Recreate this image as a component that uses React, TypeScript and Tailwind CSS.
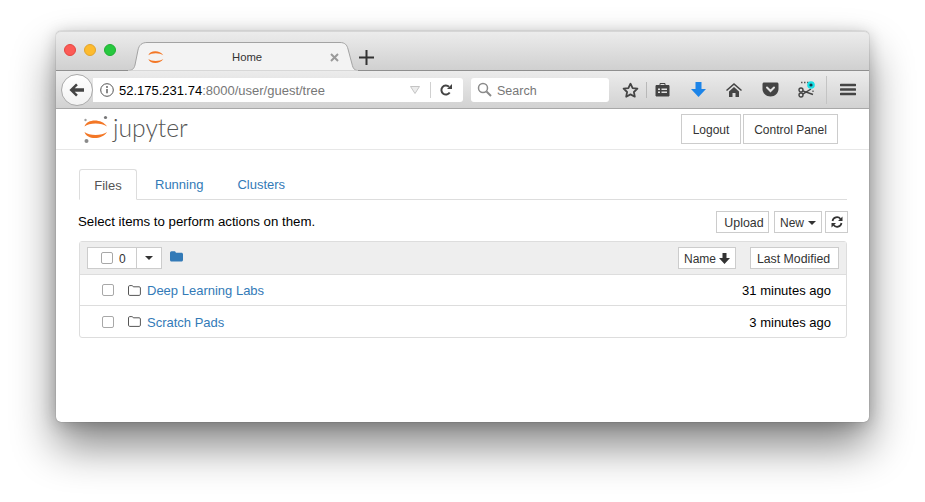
import React from "react";

function JupyterMark({ size = 30, dots = true }: { size?: number; dots?: boolean }) {
  return (
    <svg width={size} height={size} viewBox="0 0 30 30" className="block">
      <path d="M3.5 12.5 C6 4.5 21 4.5 26 12.5 C21 8.5 8 8.5 3.5 12.5Z" fill="#F37726" />
      <path d="M3.5 18 C8 22 21 22 26 18 C21 26 6 26 3.5 18Z" fill="#F37726" />
      {dots && (
        <>
          <circle cx="24.5" cy="3.5" r="1.6" fill="#767677" />
          <circle cx="4.5" cy="6" r="1.2" fill="#9e9e9e" />
          <circle cx="5.5" cy="27" r="2" fill="#8a8a8a" />
        </>
      )}
    </svg>
  );
}

function Check({ className = "" }: { className?: string }) {
  return <span className={`block w-[12px] h-[12px] rounded-[2px] border border-[#a8a8a8] bg-white ${className}`} />;
}

function FolderOutline() {
  return (
    <svg width="13" height="11" viewBox="0 0 13 11" className="block">
      <path d="M.5 9.2V1.8C.5 1.1 1 .6 1.7.6h2.2c.6 0 .9.3 1.1.7l.3.5h5.9c.7 0 1.2.5 1.2 1.2v6.2c0 .7-.5 1.2-1.2 1.2H1.7C1 10.4.5 9.9.5 9.2Z" fill="none" stroke="#555" strokeWidth="1" />
    </svg>
  );
}

function Caret({ color = "#333" }: { color?: string }) {
  return (
    <svg width="8" height="4" viewBox="0 0 8 4" className="block">
      <path d="M0 0h8L4 4Z" fill={color} />
    </svg>
  );
}

function Row({ name, time, last }: { name: string; time: string; last?: boolean }) {
  return (
    <div className={`flex items-center h-[31px] pl-[22px] pr-[15px] ${last ? "" : "border-b border-[#ddd]"}`}>
      <Check />
      <span className="ml-[14px]"><FolderOutline /></span>
      <a className="ml-[6px] mt-[2px] text-[13px] text-[#337ab7]">{name}</a>
      <span className="ml-auto mt-[2px] text-[13px] text-black">{time}</span>
    </div>
  );
}

export default function App() {
  return (
    <div className="w-[925px] h-[502px] bg-white overflow-hidden pl-[56px] pt-[31px] font-['Liberation_Sans',Arial,sans-serif]">
      <div className="relative w-[813px] h-[391px] rounded-[5px] bg-white flex flex-col shadow-[0_0_1px_rgba(0,0,0,0.55),0_24px_44px_rgba(0,0,0,0.48),0_2px_16px_rgba(0,0,0,0.2)]">
        {/* Title bar */}
        <div className="relative h-[40px] rounded-t-[5px] border-t border-[#d6d6d6] border-b border-b-[#8f8f8f] bg-gradient-to-b from-[#ececec] to-[#d0d0d0] flex items-center">
          <div className="flex gap-[8px] ml-[8px] -mt-[2px]">
            <span className="w-[12px] h-[12px] rounded-full bg-[#fc5b57] border border-[#e5453f]" />
            <span className="w-[12px] h-[12px] rounded-full bg-[#fdbb2e] border border-[#e2a42b]" />
            <span className="w-[12px] h-[12px] rounded-full bg-[#27c83f] border border-[#1fb032]" />
          </div>
          {/* Tab */}
          <svg width="230" height="29" viewBox="0 0 230 29" className="absolute left-[72px] top-[10px]">
            <path d="M0 28.500C4 28.500 6 27 7 23L10 8C11 3 14 .5 19 .5H212C217 .5 219 3 220 7L224 22C225 27 227 28.500 230 28.500" fill="#f3f3f3" stroke="#a3a3a3" />
            <path d="M0 29H230" stroke="#ececec" />
          </svg>
          <span className="absolute left-[90px] top-[15px]"><JupyterMark size={20} dots={false} /></span>
          <span className="absolute left-[176px] top-[18px] text-[11.300px] leading-[14px] text-[#333]">Home</span>
          <svg width="9" height="9" viewBox="0 0 9 9" className="absolute left-[274px] top-[21px]">
            <path d="M1 1l7 7M8 1L1 8" stroke="#9a9a9a" strokeWidth="2" />
          </svg>
          <svg width="15" height="15" viewBox="0 0 15 15" className="absolute left-[303px] top-[18px]">
            <path d="M7.500 0v15M0 7.500h15" stroke="#333" strokeWidth="2" />
          </svg>
        </div>

        {/* Toolbar */}
        <div className="relative h-[38px] border-b border-[#a8a8a8] bg-gradient-to-b from-[#ececec] to-[#d2d2d2] flex items-center pl-[37px]">
          <div className="w-[370px] h-[24px] rounded-r-[3px] bg-white flex items-center text-[13px]">
            <svg width="14" height="14" viewBox="0 0 14 14" className="ml-[7px]">
              <circle cx="7" cy="7" r="6.300" fill="none" stroke="#555" />
              <path d="M7 6v4.200" stroke="#555" strokeWidth="1.400" />
              <circle cx="7" cy="4" r=".9" fill="#555" />
            </svg>
            <span className="ml-[5px] mt-[2px] text-black">52.175.231.74</span>
            <span className="mt-[2px] text-[#777]">:8000/user/guest/tree</span>
            <svg width="10" height="8" viewBox="0 0 10 8" className="ml-[85px]">
              <path d="M.5.500h9L5 7.500Z" fill="#ececec" stroke="#c4c4c4" />
            </svg>
            <span className="ml-[10px] w-px h-[16px] bg-[#d0d0d0]" />
            <svg width="14" height="14" viewBox="0 0 14 14" className="ml-[8px]">
              <path d="M10.700 9.500A4.500 4.500 0 1 1 10 3.800" fill="none" stroke="#444" strokeWidth="2" />
              <path d="M8 6h5V1Z" fill="#444" />
            </svg>
          </div>
          <div className="ml-[8px] w-[138px] h-[24px] rounded-[3px] bg-white flex items-center">
            <svg width="15" height="15" viewBox="0 0 15 15" className="ml-[6px]">
              <circle cx="6" cy="6" r="4.500" fill="none" stroke="#8a8a8a" strokeWidth="1.500" />
              <path d="M9.500 9.500l4.500 4.500" stroke="#8a8a8a" strokeWidth="2" />
            </svg>
            <span className="ml-[5px] mt-[3px] text-[12.500px] text-[#777]">Search</span>
          </div>
          <div className="absolute left-[566px] top-0 h-full flex items-center">
            <svg width="17" height="16" viewBox="0 0 17 16">
              <path d="M8.500 1.700l2.100 4.400 4.800.6-3.500 3.300.9 4.700-4.300-2.300-4.300 2.300.9-4.700L1.600 6.700l4.800-.6Z" fill="none" stroke="#444" strokeWidth="1.800" strokeLinejoin="round" />
            </svg>
            <span className="ml-[7px] w-px h-[16px] bg-[#b8b8b8]" />
            <svg width="15" height="15" viewBox="0 0 15 15" className="ml-[8px]">
              <path d="M1 3.500h13v10.500H1Z" fill="#444" stroke="#444" strokeLinejoin="round" />
              <path d="M5 3.500V1.500h5v2" fill="none" stroke="#444" />
              <path d="M3 6.500h2v1.500H3ZM6.500 6.500H12V8H6.500ZM3 9.500h2V11H3ZM6.500 9.500H12V11H6.500Z" fill="#e2e2e2" />
            </svg>
            <svg width="15" height="15" viewBox="0 0 15 15" className="ml-[21px]">
              <path d="M4.500 0h6v7h4.500L7.500 15 0 7h4.500Z" fill="#1c84e8" />
            </svg>
            <svg width="16" height="14" viewBox="0 0 16 14" className="ml-[20px]">
              <path d="M8 0L0 7l1 1 7-6 7 6 1-1ZM3 8.500L8 4l5 4.500V14H9.500V10h-3v4H3Z" fill="#444" />
            </svg>
            <svg width="17" height="15" viewBox="0 0 17 15" className="ml-[20px]">
              <path d="M2 .5h13c.8 0 1.500.7 1.500 1.500v5c0 4-3.500 7.500-8 7.500S.5 11 .5 7V2C.5 1.200 1.200.5 2 .5Z" fill="#444" />
              <path d="M5 5.500l3.500 3.500L12 5.500" fill="none" stroke="#e2e2e2" strokeWidth="2" strokeLinecap="round" />
            </svg>
            <svg width="18" height="17" viewBox="0 0 18 17" className="ml-[19px]">
              <path d="M3 1.500h8M15 9.500v2" stroke="#555" strokeWidth="1.300" strokeDasharray="1.500 1.500" />
              <circle cx="3" cy="9" r="2" fill="none" stroke="#444" strokeWidth="1.400" />
              <circle cx="3" cy="14" r="2" fill="none" stroke="#444" strokeWidth="1.400" />
              <path d="M4.800 9.800L15 13.500M4.800 13.200L13 8" stroke="#444" strokeWidth="1.400" />
              <circle cx="13" cy="4" r="3.800" fill="#18dfe6" />
              <circle cx="13" cy="4" r="1.600" fill="#173b4a" />
            </svg>
            <span className="ml-[10px] w-px h-[28px] bg-[#c4c4c4]" />
            <svg width="16" height="13" viewBox="0 0 16 13" className="ml-[13px]">
              <path d="M1 2h14M1 6.500h14M1 11h14" stroke="#444" strokeWidth="2.600" strokeLinecap="round" />
            </svg>
          </div>
        </div>
        {/* Back button sits over the toolbar's left edge */}
        <div className="absolute left-[5px] top-[43px] w-[32px] h-[32px] rounded-full bg-gradient-to-b from-white to-[#f2f2f2] border border-[#aaa] flex items-center justify-center">
          <svg width="15" height="14" viewBox="0 0 17 15" className="-ml-px">
            <path d="M8 0l2 2-3.500 3.600H17v3.800H6.500L10 13l-2 2L.5 7.500Z" fill="#444" />
          </svg>
        </div>

        {/* Jupyter header */}
        <div className="h-[41px] border-b border-[#e7e7e7] flex items-center pl-[25px] pr-[31px]">
          <JupyterMark size={30} />
          <span className="ml-[2px] font-['Lato',sans-serif] font-light text-[24.700px] leading-[30px] -mt-[3px] text-[#555]">jupyter</span>
          <div className="ml-auto flex gap-[2px]">
            <button className="w-[60px] h-[30px] pt-[1px] border border-[#ccc] bg-white text-[12px] text-[#333]">Logout</button>
            <button className="w-[95px] h-[30px] pt-[1px] border border-[#ccc] bg-white text-[12px] text-[#333]">Control Panel</button>
          </div>
        </div>

        {/* Body */}
        <div className="pl-[23px] pr-[22px] pt-[19px]">
          <div className="flex h-[31px] border-b border-[#ddd] text-[13px]">
            <div className="w-[58px] h-[31px] pt-[2px] border border-[#ddd] border-b-white rounded-t-[3px] bg-white flex items-center justify-center text-[#555]">Files</div>
            <div className="ml-[18px] h-[30px] pt-[2px] flex items-center text-[#337ab7]">Running</div>
            <div className="ml-[34px] h-[30px] pt-[2px] flex items-center text-[#337ab7]">Clusters</div>
          </div>
          <div className="flex items-start h-[41px] pt-[11px] -ml-px -mr-px">
            <span className="text-[13.250px] leading-[22px] text-black">Select items to perform actions on them.</span>
            <div className="ml-auto flex text-[12px] text-[#333]">
              <button className="w-[53px] h-[22px] pt-[2px] pl-[3px] border border-[#ccc] bg-white text-[12.400px]">Upload</button>
              <button className="ml-[5px] w-[48px] h-[22px] pt-[2px] border border-[#ccc] bg-white flex items-center justify-center gap-[4px]">New <Caret /></button>
              <button className="ml-[3px] w-[23px] h-[22px] border border-[#ccc] bg-white flex items-center justify-center">
                <svg width="12" height="12" viewBox="0 0 12 12">
                  <path d="M1.500 5A4.500 4.500 0 0 1 9.500 3M10.500 7A4.500 4.500 0 0 1 2.500 9" fill="none" stroke="#333" strokeWidth="1.700" />
                  <path d="M11.500 .5V5H7ZM.5 11.500V7H5Z" fill="#333" />
                </svg>
              </button>
            </div>
          </div>
          <div className="border border-[#ddd] rounded-[3px]">
            <div className="h-[33px] bg-[#eee] border-b border-[#ddd] flex items-center pl-[7px] pr-[7px] text-[12px] text-[#333]">
              <div className="flex h-[22px] w-[75px] border border-[#ccc] bg-white items-center">
                <div className="w-[49px] h-full flex items-center border-r border-[#ccc] pl-[13px]">
                  <Check />
                  <span className="ml-[6px] mt-[2px]">0</span>
                </div>
                <div className="flex-1 flex justify-center"><Caret /></div>
              </div>
              <svg width="13" height="11" viewBox="0 0 13 11" className="ml-[8px] -mt-[3px]">
                <path d="M0 2C0 1 .7.300 1.500.300h2.700c.8 0 1.200.4 1.500 1l.2.500h5.600c.8 0 1.500.7 1.500 1.500v5.700c0 .8-.7 1.500-1.500 1.500h-10C.7 10.500 0 9.800 0 9Z" fill="#337ab7" />
              </svg>
              <button className="ml-auto w-[58px] h-[22px] pt-[2px] border border-[#ccc] bg-white flex items-center justify-center gap-[3px]">
                Name
                <svg width="11" height="11" viewBox="0 0 11 11" className="-mt-[2px]">
                  <path d="M3.500 0h4v5H11L5.500 11 0 5h3.500Z" fill="#333" />
                </svg>
              </button>
              <button className="ml-[14px] w-[89px] h-[22px] pt-[2px] pr-[2px] border border-[#ccc] bg-white text-[12.300px]">Last Modified</button>
            </div>
            <Row name="Deep Learning Labs" time="31 minutes ago" />
            <Row name="Scratch Pads" time="3 minutes ago" last />
          </div>
        </div>
      </div>
    </div>
  );
}
